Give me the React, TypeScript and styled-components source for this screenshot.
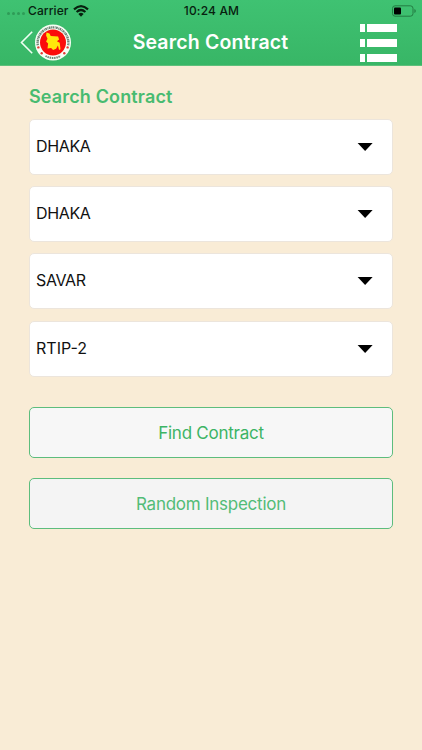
import React from 'react';
import styled, { createGlobalStyle } from 'styled-components';

const GlobalStyle = createGlobalStyle`
  * { box-sizing: border-box; }
  html, body { margin: 0; padding: 0; background: #f9ecd6; }
  body { font-family: Inter, "Liberation Sans", sans-serif; }
`;

const Screen = styled.div`
  width: 422px;
  height: 750px;
  overflow: hidden;
  background: #f9ecd6;
`;

const Header = styled.header`
  height: 66px;
  background: linear-gradient(#3fc272, #38b666);
  border-bottom: 1px solid #5fbf7b;
`;

const StatusBar = styled.div`
  height: 20px;
  display: grid;
  grid-template-columns: 1fr auto 1fr;
  align-items: center;
  padding: 1px 6px 0 7px;
  color: #08210f;
`;

const Carrier = styled.div`
  display: flex;
  align-items: center;
`;

const SignalDots = styled.div`
  display: flex;
  gap: 2px;
  margin: 6px 3px 0 0;
`;

const Dot = styled.i`
  width: 3px;
  height: 3px;
  border-radius: 50%;
  background: #2f9b57;
`;

const StatusText = styled.span<{ $spacing: number }>`
  font-size: 12px;
  line-height: 18px;
  font-weight: 500;
  letter-spacing: ${(p) => p.$spacing}px;
`;

const WifiIcon = styled.svg`
  margin-left: 4px;
`;

const BatteryIcon = styled.svg`
  justify-self: end;
`;

const NavBar = styled.nav`
  height: 45px;
  display: grid;
  grid-template-columns: 1fr auto 1fr;
  align-items: center;
  padding: 0 25px 0 20px;
`;

const BackButton = styled.button`
  display: flex;
  align-items: center;
  gap: 1px;
  padding: 0;
  border: 0;
  background: none;
`;

const Title = styled.h1`
  margin: 0 -2px 1px 2px;
  color: #fff;
  font-size: 19.5px;
  line-height: 24px;
  font-weight: 600;
  letter-spacing: 0.17px;
`;

const MenuButton = styled.button`
  justify-self: end;
  display: grid;
  grid-template-columns: 5px 30px;
  grid-auto-rows: 8px;
  gap: 7px 2px;
  padding: 0;
  border: 0;
  background: none;
`;

const MenuBar = styled.span`
  background: #fff;
`;

const Content = styled.main`
  padding: 19px 29px 0;
`;

const SectionTitle = styled.h2`
  margin: 0 0 10px;
  color: #48bb70;
  font-size: 18px;
  line-height: 24px;
  font-weight: 600;
  letter-spacing: 0.14px;
`;

const Fields = styled.div`
  display: grid;
  grid-auto-rows: 56px;
  gap: 11.2px;
`;

const SelectField = styled.button`
  display: flex;
  align-items: center;
  justify-content: space-between;
  width: 364px;
  padding: 0 18px 1px 6px;
  border: 1px solid #ece5dc;
  border-radius: 5px;
  background: #fff;
  color: #111;
  font-family: inherit;
  font-size: 16px;
`;

const FieldValue = styled.span<{ $spacing: number }>`
  padding-bottom: 1px;
  letter-spacing: ${(p) => p.$spacing}px;
`;

const Actions = styled.div`
  display: grid;
  grid-auto-rows: 51px;
  gap: 20px;
  margin-top: 30.4px;
`;

const ActionButton = styled.button<{ $muted?: boolean }>`
  padding: 2px 0 0;
  border: 1px solid #5dbd7d;
  border-radius: 5px;
  background: ${(p) => (p.$muted ? '#f4f4f4' : '#f7f7f7')};
  color: ${(p) => (p.$muted ? '#52bc77' : '#3cb465')};
  font-family: inherit;
  font-size: 17px;
  letter-spacing: -0.25px;
`;

const Seal = () => (
  <svg width="36" height="37" viewBox="0.5 0 36 37">
    <circle cx="18.5" cy="18.5" r="18" fill="#f8fff5" />
    <path d="M3.3 21.2 A15.4 15.4 0 1 1 33.7 21.2" fill="none" stroke="#6f8577" strokeWidth="2.4" strokeDasharray="1.7 .6 .9 .5" />
    <path d="M11 32 A15.4 15.4 0 0 0 26 32" fill="none" stroke="#6f8577" strokeWidth="2" strokeDasharray="1.5 .7" />
    <circle cx="18.5" cy="18.5" r="13" fill="#fb0d0b" />
    <g fill="#e33b35">
      <circle cx="3.9" cy="23.4" r="1.2" /><circle cx="7.2" cy="29.2" r="1.2" />
      <circle cx="33.1" cy="23.4" r="1.2" /><circle cx="29.8" cy="29.2" r="1.2" />
    </g>
    <path d="M12 8.4 L15 9.4 L16.2 12 L23.6 12.6 L24.6 15.4 L22.4 17.2 L25.2 18.8 L26 25.2 L24.6 26 L23.4 21.6 L21.6 24.8 L18.6 26 L16.6 24 L13 24.4 L13.6 19.6 L11.6 17.4 L13 14.8 L11.6 11.6 Z" fill="#ffe80b" />
  </svg>
);

const Caret = () => (
  <svg width="17" height="11" viewBox="0 0 17 11">
    <path d="M.6 2 H15.6 L8.1 10 Z" fill="#000" />
  </svg>
);

const fields = [
  { id: 'division', value: 'DHAKA', spacing: -0.35 },
  { id: 'district', value: 'DHAKA', spacing: -0.35 },
  { id: 'upazila', value: 'SAVAR', spacing: -0.35 },
  { id: 'project', value: 'RTIP-2', spacing: 0 },
];

export default function App() {
  return (
    <Screen>
      <GlobalStyle />
      <Header>
        <StatusBar>
          <Carrier>
            <SignalDots><Dot /><Dot /><Dot /><Dot /></SignalDots>
            <StatusText $spacing={0.1}>Carrier</StatusText>
            <WifiIcon width="16" height="12" viewBox="0 0 16 12">
              <g fill="none" stroke="#08210f" strokeWidth="2.2">
                <path d="M1 4.4 Q8 -2 15 4.4" />
                <path d="M3.6 7 Q8 3 12.4 7" />
              </g>
              <path d="M5.4 8.9 Q8 6.8 10.6 8.9 L8 11.7 Z" fill="#08210f" />
            </WifiIcon>
          </Carrier>
          <StatusText $spacing={0.15}>10:24 AM</StatusText>
          <BatteryIcon width="25" height="12" viewBox="0 0 25 12">
            <rect x="1.5" y=".8" width="20.5" height="10.4" rx="2.6" fill="none" stroke="#247c43" strokeWidth="1" />
            <rect x="3" y="2.4" width="7" height="7.2" rx="1" fill="#000" />
            <path d="M23.4 4 Q24.8 4.3 24.8 6 Q24.8 7.7 23.4 8 Z" fill="#247c43" />
          </BatteryIcon>
        </StatusBar>
        <NavBar>
          <BackButton aria-label="Back">
            <svg width="14" height="25" viewBox="0 0 14 25">
              <path d="M12.2 1.8 L1.5 12.5 L12.2 23.2" fill="none" stroke="#effff3" strokeWidth="1.6" />
            </svg>
            <Seal />
          </BackButton>
          <Title>Search Contract</Title>
          <MenuButton aria-label="Menu">
            <MenuBar /><MenuBar />
            <MenuBar /><MenuBar />
            <MenuBar /><MenuBar />
          </MenuButton>
        </NavBar>
      </Header>
      <Content>
        <SectionTitle>Search Contract</SectionTitle>
        <Fields>
          {fields.map((f) => (
            <SelectField key={f.id}>
              <FieldValue $spacing={f.spacing}>{f.value}</FieldValue>
              <Caret />
            </SelectField>
          ))}
        </Fields>
        <Actions>
          <ActionButton>Find Contract</ActionButton>
          <ActionButton $muted>Random Inspection</ActionButton>
        </Actions>
      </Content>
    </Screen>
  );
}
